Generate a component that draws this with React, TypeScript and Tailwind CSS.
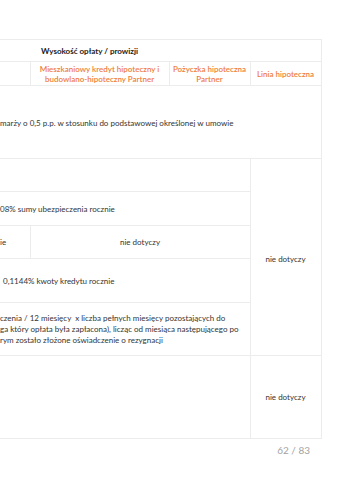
export default function App() {
  const border = "border-[#ececec]";
  return (
    <div className="min-h-[480px] w-[339px] bg-white font-['Lato',sans-serif] text-[#333]">
      <div className="pt-[39px]">
        <table className={`w-[321px] table-fixed border-collapse border-r ${border}`}>
          <colgroup>
            <col className="w-[30px]" />
            <col className="w-[139px]" />
            <col className="w-[81px]" />
            <col className="w-[71px]" />
          </colgroup>
          <thead>
            <tr className={`h-[22px] border-t ${border}`}>
              <th colSpan={4} className="pl-[41px] text-left text-[8px] font-bold text-[#222]">
                Wysokość opłaty / prowizji
              </th>
            </tr>
            <tr className={`h-[24px] border-t ${border}`}>
              <th />
              <th className={`border-l ${border} text-center text-[8px] font-semibold leading-[10px] text-[#ef7d3c]`}>
                Mieszkaniowy kredyt hipoteczny i
                <br />
                budowlano-hipoteczny Partner
              </th>
              <th className={`border-l ${border} text-center text-[8px] font-semibold leading-[10px] text-[#ef7d3c]`}>
                Pożyczka hipoteczna
                <br />
                Partner
              </th>
              <th className={`border-l ${border} text-center text-[8px] font-semibold leading-[10px] text-[#ef7d3c]`}>
                Linia hipoteczna
              </th>
            </tr>
          </thead>
          <tbody className="text-[8px]">
            <tr className={`h-[73px] border-t ${border}`}>
              <td colSpan={4} className="pt-[2px] text-left">
                marży o 0,5 p.p. w stosunku do podstawowej określonej w umowie
              </td>
            </tr>
            <tr className={`h-[33px] border-t ${border}`}>
              <td colSpan={3} />
              <td rowSpan={5} className={`border-l ${border} pt-[3px] text-center`}>
                nie dotyczy
              </td>
            </tr>
            <tr className={`h-[34px] border-t ${border}`}>
              <td colSpan={3} className="text-left">
                08% sumy ubezpieczenia rocznie
              </td>
            </tr>
            <tr className={`h-[33px] border-t ${border}`}>
              <td className="text-left">ie</td>
              <td colSpan={2} className={`border-l ${border} text-center`}>
                nie dotyczy
              </td>
            </tr>
            <tr className={`h-[44px] border-t ${border}`}>
              <td colSpan={3} className="pl-[3px] text-left">
                0,1144% kwoty kredytu rocznie
              </td>
            </tr>
            <tr className={`h-[53px] border-t ${border}`}>
              <td colSpan={3} className="text-left leading-[11px]">
                czenia / 12 miesięcy&nbsp; x liczba pełnych miesięcy pozostających do
                <br />
                ga który opłata była zapłacona), licząc od miesiąca następującego po
                <br />
                rym zostało złożone oświadczenie o rezygnacji
              </td>
            </tr>
            <tr className={`h-[83px] border-t border-b ${border}`}>
              <td colSpan={3} />
              <td className={`border-l ${border} text-center`}>nie dotyczy</td>
            </tr>
          </tbody>
        </table>
        <div className="flex w-[310px] justify-end pt-[4px] text-[10px] text-[#a3a3a3]">
          62 / 83
        </div>
      </div>
    </div>
  );
}
